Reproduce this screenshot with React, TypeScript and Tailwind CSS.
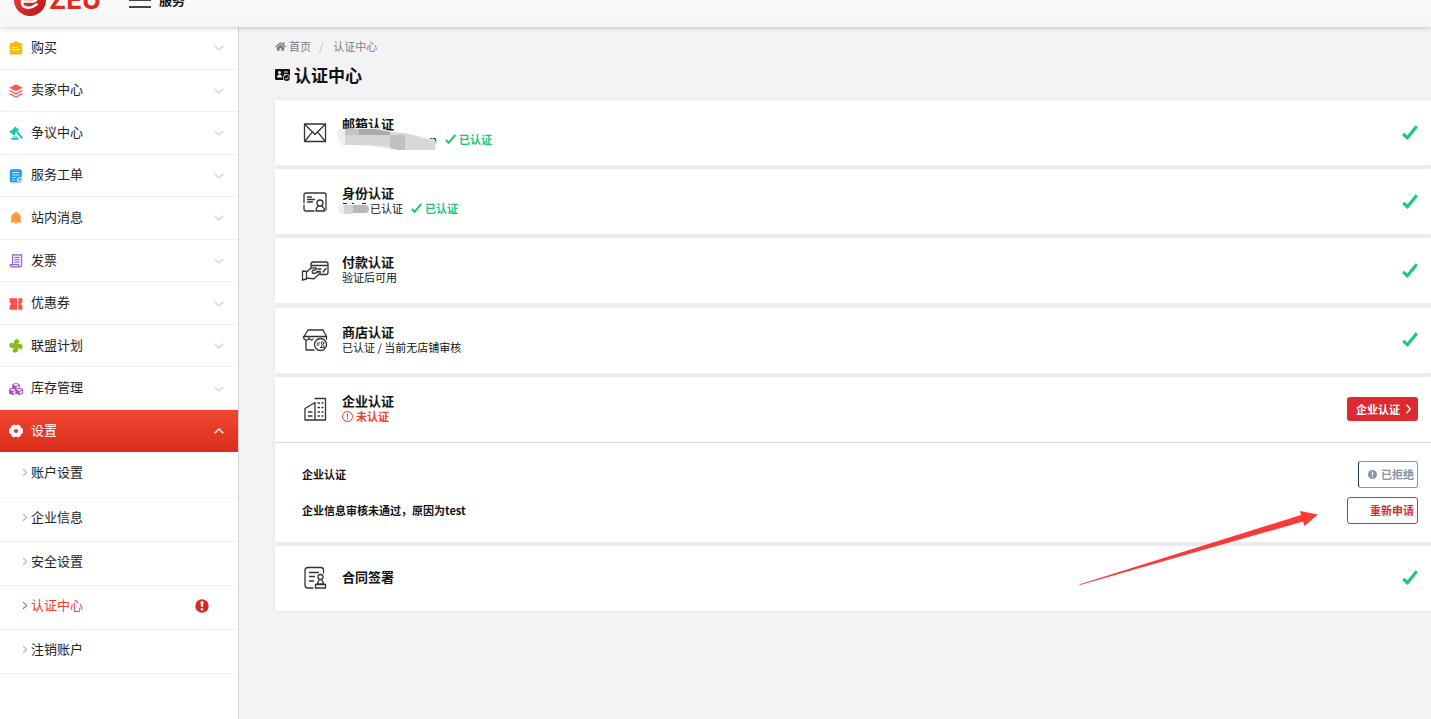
import type { ReactNode } from "react";
import { FaCubes, FaHome } from "react-icons/fa";

const Svg14 = ({ children }: { children: ReactNode }) => (
  <svg viewBox="0 0 14 14" className="size-[14px]" aria-hidden="true">
    {children}
  </svg>
);

const CardSvg = ({ children }: { children: ReactNode }) => (
  <svg
    viewBox="0 0 28 28"
    className="size-7 shrink-0"
    fill="none"
    stroke="#333"
    strokeWidth="1.3"
    strokeLinecap="round"
    strokeLinejoin="round"
    aria-hidden="true"
  >
    {children}
  </svg>
);

const menu: { label: string; icon: ReactNode }[] = [
  {
    label: "购买",
    icon: (
      <Svg14>
        <path fill="#fdb90b" d="M2 2h2.500V1a.6.6 0 0 1 .6-.6h3.800a.6.6 0 0 1 .6.6v1H12a1.200 1.200 0 0 1 1.200 1.200v9A1.200 1.200 0 0 1 12 13.400H2A1.200 1.200 0 0 1 .8 12.200v-9A1.200 1.200 0 0 1 2 2z" />
        <path stroke="#fff" strokeWidth="1.200" d="M3.500 6.500h5M3.500 8.700h7" />
      </Svg14>
    ),
  },
  {
    label: "卖家中心",
    icon: (
      <Svg14>
        <path fill="#fb5b50" d="M7 .2l6.800 3.500L7 7.200.2 3.700z" />
        <path fill="none" stroke="#fb5b50" strokeWidth="1.4" d="M.5 6.500L7 9.900l6.500-3.400M.5 9.600L7 13l6.500-3.400" />
      </Svg14>
    ),
  },
  {
    label: "争议中心",
    icon: (
      <Svg14>
        <g fill="#1fbfb4">
          <path d="M6.100.4l4 3.400-.9 1.100-.6-.3-2.800 3.500.5.500-.9 1.100L.3 5.700l.9-1.100.7.300L5 1.900l.2-.4z" />
          <path d="M7.200 6.500l1.400-1.500 5.200 6.600-1.300 1.300z" />
          <rect x="2.200" y="12" width="7.500" height="1.700" rx=".6" />
          <rect x="3.300" y="10.600" width="5.300" height="1" rx=".5" />
        </g>
      </Svg14>
    ),
  },
  {
    label: "服务工单",
    icon: (
      <Svg14>
        <rect x=".8" y=".3" width="12" height="13.300" rx="1.800" fill="#1c9cf6" />
        <path stroke="#c4e5ff" strokeWidth="1" d="M3 3.500h7.500M3 6h7.500M3 8.500h4M3 11h3" />
        <circle cx="10.700" cy="10.700" r="3" fill="#a9d8ff" />
        <path fill="none" stroke="#1c9cf6" strokeWidth="1" d="M10.500 9v2l1.300-.3" />
      </Svg14>
    ),
  },
  {
    label: "站内消息",
    icon: (
      <Svg14>
        <path fill="#fb9a37" d="M7 .8c.6 0 1 .4 1 .9 2 .5 3.700 2.100 3.700 4.300v3.800h.5v1.600H1.800V9.800h.5V6c0-2.200 1.700-3.800 3.700-4.300 0-.5.4-.9 1-.9zM5.900 12.100h2.200a1.100 1.100 0 0 1-2.200 0z" />
      </Svg14>
    ),
  },
  {
    label: "发票",
    icon: (
      <Svg14>
        <path fill="#eee5fb" stroke="#8d62c9" strokeWidth="1.1" d="M3.500.9h9.200v10.200a1.800 1.800 0 0 1-1.800 1.800H2.700a1.500 1.500 0 0 1-1.500-1.500v-.8h2.300z" />
        <path fill="none" stroke="#8d62c9" strokeWidth="1" d="M5.500 3.500h5M5.500 5.800h5M5.500 8h5M3.500 10.600h6.300v2.200" />
      </Svg14>
    ),
  },
  {
    label: "优惠券",
    icon: (
      <Svg14>
        <path fill="#ff5148" d="M.6 1.200h7.600v11.600H.6V8.700a1.800 1.800 0 0 0 0-3.400zM9.300 1.200h4.100v4.100a1.800 1.800 0 0 0 0 3.400v4.100H9.300z" />
      </Svg14>
    ),
  },
  {
    label: "联盟计划",
    icon: (
      <Svg14>
        <g fill="#84bd1b">
          <path id="blade" d="M6.300 7.300C4 6.500 3.900.3 8 .3c1.700 0 2.600 1.500 2.200 3.500-1 .1-2 .8-2 1.900z" />
          <path transform="rotate(90 7 7)" d="M6.300 7.300C4 6.500 3.900.3 8 .3c1.700 0 2.600 1.500 2.200 3.500-1 .1-2 .8-2 1.900z" />
          <path transform="rotate(180 7 7)" d="M6.300 7.300C4 6.500 3.900.3 8 .3c1.700 0 2.600 1.500 2.200 3.500-1 .1-2 .8-2 1.900z" />
          <path transform="rotate(270 7 7)" d="M6.300 7.300C4 6.500 3.900.3 8 .3c1.700 0 2.600 1.500 2.200 3.500-1 .1-2 .8-2 1.900z" />
        </g>
      </Svg14>
    ),
  },
  { label: "库存管理", icon: <FaCubes className="size-[14px] text-[#a94fb8]" /> },
];

const subMenu = ["账户设置", "企业信息", "安全设置", "认证中心", "注销账户"];

const Chevron = ({ className }: { className: string }) => (
  <svg viewBox="0 0 10 6" className={className} fill="none" stroke="currentColor" strokeWidth="1.300" aria-hidden="true">
    <path d="M.7.7L5 5l4.300-4.300" />
  </svg>
);

const Check = ({ className }: { className: string }) => (
  <svg viewBox="0 0 16 16" className={className} fill="none" stroke="#15c77f" strokeWidth="3" aria-hidden="true">
    <path d="M1.200 8.800l4.200 4L14.800 1.200" />
  </svg>
);

const Verified = () => (
  <span className="flex items-center gap-[3px] font-bold text-[#15c77f]">
    <Check className="size-[11px]" />
    已认证
  </span>
);

const icons = {
  mail: (
    <CardSvg>
      <rect x="3.500" y="5" width="21" height="17.500" />
      <path d="M4 5.500L14 15.500l10-10M4 22l7.500-9.200M24 22l-7.500-9.200" />
    </CardSvg>
  ),
  identity: (
    <CardSvg>
      <path d="M3 15V7a2 2 0 0 1 2-2h18a2 2 0 0 1 2 2v15M3 17.500V21a2 2 0 0 0 2 2h8M6.500 9h4M6.500 11.500h7M6.500 14h5" />
      <circle cx="19" cy="15" r="3" />
      <path d="M17.500 18c-2 1.200-2.500 2.500-2.500 5h8.500c0-2.500-1-4-3-5" />
    </CardSvg>
  ),
  payment: (
    <CardSvg>
      <path d="M10 11V7.500A2.500 2.500 0 0 1 12.500 5H25a2 2 0 0 1 2 2v8.500a2 2 0 0 1-2 2h-6M10.500 8.500H27M17 12h3M16 14.500h3M22 15l3-3.500" />
      <path d="M1.500 14l4 .5v7.500l-4 1zM5.500 15l4-3.500c1-.8 3-.8 5-.5 1.500.3 1 1.700-.2 1.900l-2.800.6c-1 2 .2 3 1.800 2.800l4.200-1.500c2-.6 2.500 1 1 2L13 21.800 5.500 21" />
    </CardSvg>
  ),
  shop: (
    <CardSvg>
      <path d="M7 4h15l3.500 6.500H3zM2.500 10.500c0 4.500 5 4.500 5.500 1.500 1 2 3 2.500 4 1M25.500 10.500v2.500M5 14.500V24h8" />
      <circle cx="19.500" cy="18.500" r="6" />
      <path strokeWidth="1" d="M16 17h2.500M16 19h2M19.500 21.500h4l-1-2.500M20 21.500l1-2.500" />
      <circle cx="21.500" cy="17" r="1.300" strokeWidth="1" />
    </CardSvg>
  ),
  company: (
    <CardSvg>
      <path d="M4 25V13.500l10-6V25zM14 3.500h10.500V25H4" />
      <path d="M7.500 17h3.500M7.500 21h3.500" />
      <path strokeDasharray="1.500 2.500" d="M17 8h5M17 12.500h5M17 17h5M17 21h5" />
    </CardSvg>
  ),
  contract: (
    <CardSvg>
      <path d="M22.500 9V6A2.500 2.500 0 0 0 20 3.500H7A3 3 0 0 0 4 6.500V21a3 3 0 0 0 3 3h5M8.500 8.500h9M8.500 12.500h5M8.500 17h4" />
      <circle cx="19.500" cy="13" r="2.500" />
      <path d="M18.500 15.500L16 20h7l-2.500-4.500M14.500 20.500h10V24h-10z" />
    </CardSvg>
  ),
};

function CardRow({ icon, title, children, action }: { icon: ReactNode; title: string; children?: ReactNode; action?: ReactNode }) {
  return (
    <div className="flex h-[65px] items-center pr-[13px] pl-[26px]">
      {icon}
      <div className="ml-[13px] grow pb-[2px] text-[11px] leading-[15px] text-[#111]">
        <h2 className="text-[13px] leading-4 font-bold">{title}</h2>
        {children}
      </div>
      {action ?? <Check className="size-4" />}
    </div>
  );
}

const cardClass = "bg-white shadow-[0_0_5px_rgba(0,0,0,0.07)]";

export default function App() {
  return (
    <div className="relative flex min-h-screen flex-col overflow-hidden bg-[#f3f3f6] font-['Noto_Sans_CJK_SC',sans-serif] text-[#222]">
      <header className="relative z-10 -mt-[31px] flex h-[58px] shrink-0 items-center bg-linear-to-b from-white to-[#f6f6f6] pt-1 pl-[14px] shadow-[0_1px_5px_rgba(0,0,0,0.2)]">
        <a href="#home" className="flex items-center gap-[3px] text-[#e02a20]">
          <svg viewBox="0 0 32 32" className="size-8" aria-hidden="true">
            <defs>
              <linearGradient id="logo" x1="0" y1="0" x2="1" y2="1">
                <stop offset="0" stopColor="#f04a3c" />
                <stop offset="1" stopColor="#b81218" />
              </linearGradient>
            </defs>
            <circle cx="16" cy="16" r="16" fill="url(#logo)" />
            <path
              d="M9 17.500h10c5 0 5-8-2-8-5 0-9 3.500-9 8.500 0 6.500 8 7.500 14.500 2.500"
              fill="none"
              stroke="#fff"
              strokeWidth="2.600"
              strokeLinecap="round"
            />
          </svg>
          <span className="font-[Inter,sans-serif] text-[26px] leading-7 font-bold">ZEU</span>
        </a>
        <button type="button" aria-label="菜单" className="ml-7 text-[#444]">
          <svg viewBox="0 0 22 18" className="h-[18px] w-[22px]" stroke="currentColor" strokeWidth="2" aria-hidden="true">
            <path d="M0 2h22M0 9h22M0 16h22" />
          </svg>
        </button>
        <span className="ml-2 text-[13px] leading-4 font-bold text-[#111]">服务</span>
      </header>

      <div className="flex grow">
        <nav className="w-[239px] shrink-0 border-r border-[#d4d4d6] bg-white text-[13px]">
          <ul className="grid h-[383px] grid-rows-9">
            {menu.map((item) => (
              <li key={item.label} className="border-b border-[#f0f0f0]">
                <button type="button" className="flex h-full w-full items-center pt-px pr-[14px] pl-[9px] text-left">
                  {item.icon}
                  <span className="ml-2 grow pb-[3px] leading-4">{item.label}</span>
                  <Chevron className="h-[6px] w-[10px] text-[#d4d6da]" />
                </button>
              </li>
            ))}
          </ul>
          <button type="button" className="flex h-[42px] w-full items-center bg-linear-to-b from-[#f04632] to-[#db2d1c] pr-[14px] pl-[9px] text-left text-white">
            <Svg14>
              <path
                fill="#fff"
                fillRule="evenodd"
                d="M4.200.7h1.600L7 1.700 8.200.7h1.600l1.600 1 .3 1.700 1.500.8.6 1.600v2.400l-.6 1.600-1.500.8-.3 1.700-1.600 1H8.200L7 12.300l-1.200 1H4.200l-1.600-1-.3-1.700-1.500-.8L.2 8.200V5.800l.6-1.600 1.500-.8.3-1.700zM7 4.900a2.100 2.100 0 1 0 0 4.200 2.100 2.100 0 0 0 0-4.200z"
              />
            </Svg14>
            <span className="ml-2 grow pb-[3px] leading-4">设置</span>
            <Chevron className="h-[6px] w-[10px] rotate-180" />
          </button>
          <ul>
            {subMenu.map((label, i) => {
              const current = label === "认证中心";
              return (
                <li key={label} className={i === 0 ? "h-[46px] border-b border-[#f4f4f4]" : "h-11 border-b border-[#f0f0f0]"}>
                  <a
                    href="#settings"
                    className={current ? "flex h-full items-center pr-[29px] pb-1 pl-[21px] text-[#f5392b]" : "flex h-full items-center pr-[29px] pb-1 pl-[21px]"}
                  >
                    <Chevron className={current ? "h-[5px] w-2 -rotate-90" : "h-[5px] w-2 -rotate-90 text-[#aaa]"} />
                    <span className="ml-[2px] grow pb-px leading-4">{label}</span>
                    {current && (
                      <svg viewBox="0 0 14 14" className="size-[14px]" aria-hidden="true">
                        <circle cx="7" cy="7" r="6.700" fill="#dc2626" />
                        <path fill="#fff" d="M5.500 2.300h3l-.5 5.700H6z" />
                        <circle cx="7" cy="10.300" r="1.300" fill="#fff" />
                      </svg>
                    )}
                  </a>
                </li>
              );
            })}
          </ul>
        </nav>

        <main className="min-w-0 grow pt-[10px] pl-9">
          <nav className="flex items-center text-[11px] leading-[18px] text-[#7b7b86]">
            <a href="#home" className="flex items-center gap-[3px]">
              <FaHome className="size-[11px]" />
              首页
            </a>
            <span className="mx-2 text-[#bbb]">/</span>
            <span className="ml-[2px]">认证中心</span>
          </nav>
          <h1 className="mt-[6px] flex items-center gap-1 text-[17px] leading-7 font-bold text-[#111]">
            <svg viewBox="0 0 15 14" className="h-[14px] w-[15px]" aria-hidden="true">
              <rect y="1" width="15" height="11" rx="1" fill="#111" />
              <circle cx="4.500" cy="4.500" r="1.500" fill="#f3f3f6" />
              <path fill="#f3f3f6" d="M2 9.500c0-4 5-4 5 0z" />
              <path stroke="#f3f3f6" d="M9 4h4M9 6.500h2" />
              <circle cx="11.700" cy="10" r="3.700" fill="#f3f3f6" />
              <circle cx="11.700" cy="10" r="3" fill="#111" />
              <path fill="none" stroke="#f3f3f6" d="M10.200 10l1.200 1.200 2-2.200" />
            </svg>
            认证中心
          </h1>

          <div className="mt-[11px] flex min-h-[511px] flex-col justify-between">
            <section className={cardClass}>
              <CardRow icon={icons.mail} title="邮箱认证">
                <div className="relative flex items-center gap-2">
                  <span className="w-[95px] text-right">m</span>
                  <Verified />
                  <svg viewBox="0 0 102 24" className="absolute -top-[4px] -left-[6px] h-6 w-[102px]" aria-hidden="true">
                    <path fill="#efefef" d="M3 1Q-1 4 2 9l3 8 28 1 26 4h39q2-3 2-7l-1-3-9-3-36-6-14-4z" />
                    <path fill="#ababab" d="M9 1h31l14 3v3H9z" />
                    <path fill="#c4c4c4" d="M9 1h14v6H9z" />
                    <path fill="#d6d6d6" d="M9 7h45v12l-21-2H9z" />
                    <path fill="#c0c0c0" d="M54 7h15v15h-7l-8-2z" />
                    <path fill="#d8d8d8" d="M54 4l15 1 21 6 9 1v10H69V7H54z" />
                  </svg>
                </div>
              </CardRow>
            </section>

            <section className={cardClass}>
              <CardRow icon={icons.identity} title="身份认证">
                <div className="relative flex items-center gap-2">
                  <span className="pl-7">已认证</span>
                  <Verified />
                  <svg viewBox="0 0 34 14" className="absolute top-px -left-[5px] h-[14px] w-[34px]" aria-hidden="true">
                    <path stroke="#222" d="M6 1.500h4M15 1.500h2M25 1.500h4" />
                    <path fill="#ededed" d="M1 5l7-2v10l-6-2z" />
                    <path fill="#d4d4d4" d="M7 3h9v9H7z" />
                    <path fill="#b8b8b8" d="M16 3h13q3 1 3 4t-3 4H16z" />
                  </svg>
                </div>
              </CardRow>
            </section>

            <section className={cardClass}>
              <CardRow icon={icons.payment} title="付款认证">
                <p>验证后可用</p>
              </CardRow>
            </section>

            <section className={cardClass}>
              <CardRow icon={icons.shop} title="商店认证">
                <p>已认证 / 当前无店铺审核</p>
              </CardRow>
            </section>

            <section className={cardClass}>
              <CardRow
                icon={icons.company}
                title="企业认证"
                action={
                  <button type="button" className="flex h-6 items-center gap-[6px] rounded-[3px] bg-[#dc2a30] pr-[7px] pl-[9px] text-[11px] font-bold text-white">
                    企业认证
                    <svg viewBox="0 0 5 10" className="h-[10px] w-[5px]" fill="none" stroke="currentColor" strokeWidth="1.300" aria-hidden="true">
                      <path d="M.5.700L4.300 5 .5 9.300" />
                    </svg>
                  </button>
                }
              >
                <p className="flex items-center gap-[3px] font-bold text-[#f5392b]">
                  <svg viewBox="0 0 11 11" className="size-[11px]" fill="none" stroke="currentColor" aria-hidden="true">
                    <circle cx="5.500" cy="5.500" r="5" />
                    <path d="M5.500 2.500V6.500M5.500 7.500v1" />
                  </svg>
                  未认证
                </p>
              </CardRow>
              <div className="flex flex-col gap-[9px] border-t border-[#dcdcdc] py-[18px] pr-[13px] pl-[27px] text-[11px] font-bold text-[#111]">
                <div className="flex items-center justify-between">
                  <p>企业认证</p>
                  <button type="button" className="flex h-[27px] items-center gap-1 rounded-[3px] border border-[#8796a5] border-l-[#1f3a52] pr-[3px] pl-[9px] text-[#8594a3]">
                    <svg viewBox="0 0 9 9" className="size-[9px]" aria-hidden="true">
                      <circle cx="4.500" cy="4.500" r="4.500" fill="currentColor" />
                      <path stroke="#fff" strokeWidth="1.300" d="M4.500 1.500v3.700M4.500 6.200v1.300" />
                    </svg>
                    已拒绝
                  </button>
                </div>
                <div className="flex items-center justify-between">
                  <p>企业信息审核未通过，原因为test</p>
                  <button type="button" className="h-[27px] rounded-[3px] border border-[#dc2a30] pr-[3px] pl-[22px] text-[#dc2a30]">
                    重新申请
                  </button>
                </div>
              </div>
            </section>

            <section className={cardClass}>
              <CardRow icon={icons.contract} title="合同签署" />
            </section>
          </div>
        </main>
      </div>

      <svg viewBox="0 0 240 76" className="pointer-events-none absolute top-[510px] right-[112px] h-[76px] w-[240px]" aria-hidden="true">
        <path fill="#fa3a38" d="M0 74.500L222 5l-1-4 18 3.500L225.500 16l-1.500-4.500L1 75z" />
      </svg>
    </div>
  );
}
